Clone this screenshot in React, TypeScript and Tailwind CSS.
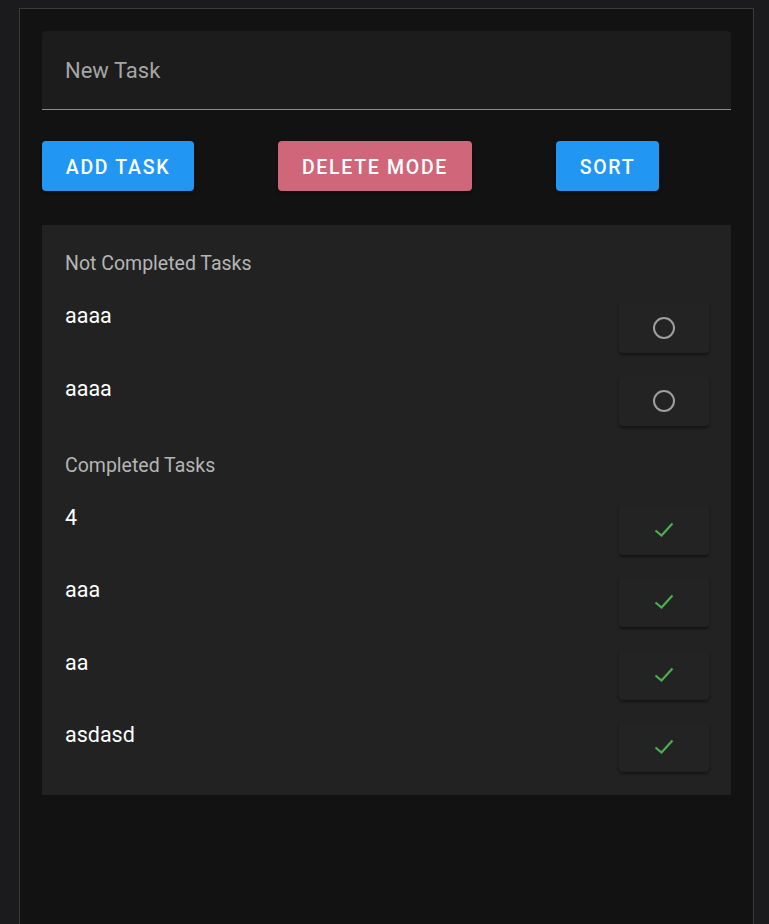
import React from "react";

type Task = { id: number; name: string; done: boolean };

const tasks: Task[] = [
  { id: 1, name: "aaaa", done: false },
  { id: 2, name: "aaaa", done: false },
  { id: 3, name: "4", done: true },
  { id: 4, name: "aaa", done: true },
  { id: 5, name: "aa", done: true },
  { id: 6, name: "asdasd", done: true },
];

const CircleIcon = () => (
  <svg width="24" height="24" viewBox="0 0 24 24" fill="none">
    <circle cx="12" cy="12" r="10" stroke="#9e9e9e" strokeWidth="2" />
  </svg>
);

const CheckIcon = () => (
  <svg width="20" height="16" viewBox="0 0 20 16" fill="none">
    <path d="M1.5 8.5 L7.5 13.5 L18.5 1.5" stroke="#4caf50" strokeWidth="2.2" />
  </svg>
);

const TaskRow = ({ task }: { task: Task }) => (
  <div className="flex items-start justify-between">
    <span className="text-[21.5px] leading-[26px] text-white">{task.name}</span>
    <button className="flex h-[50px] w-[90px] items-center justify-center rounded-[4px] bg-[#232323] shadow-[0_2px_3px_rgba(0,0,0,0.45)]">
      {task.done ? <CheckIcon /> : <CircleIcon />}
    </button>
  </div>
);

const Section = ({ title, items }: { title: string; items: Task[] }) => (
  <div className="flex flex-col gap-[27px]">
    <div className="text-[19.5px] leading-[24px] text-[#b5b5b5]">{title}</div>
    <div className="flex flex-col gap-[22.5px]">
      {items.map((t) => (
        <TaskRow key={t.id} task={t} />
      ))}
    </div>
  </div>
);

export default function App() {
  const open = tasks.filter((t) => !t.done);
  const done = tasks.filter((t) => t.done);

  return (
    <div
      className="min-h-[924px] bg-[#1b1b1d] pl-[19px] pr-[15px] pt-[8px]"
      style={{ fontFamily: "Roboto, 'Liberation Sans', sans-serif" }}
    >
      <div className="min-h-[916px] border border-b-0 border-[#3b3b3b] bg-[#121212] px-[22px] pt-[22px]">
        <div className="flex h-[79px] items-center rounded-t-[4px] border-b border-[#8a8a8a] bg-[#1c1c1c] px-[23px]">
          <input
            placeholder="New Task"
            className="w-full bg-transparent text-[22px] text-white outline-none placeholder:text-[#a5a5a5]"
          />
        </div>

        <div className="mt-[31px] flex gap-[84px]">
          <button className="h-[50px] w-[152px] rounded-[4px] bg-[#2196f3] pt-[3px] text-[19.5px] font-medium tracking-[1.7px] text-white shadow-[0_2px_3px_rgba(0,0,0,0.4)]">
            ADD TASK
          </button>
          <button className="h-[50px] w-[194px] rounded-[4px] bg-[#cf6679] pt-[3px] text-[19.5px] font-medium tracking-[1.7px] text-white shadow-[0_2px_3px_rgba(0,0,0,0.4)]">
            DELETE MODE
          </button>
          <button className="h-[50px] w-[103px] rounded-[4px] bg-[#2196f3] pt-[3px] text-[19.5px] font-medium tracking-[1.7px] text-white shadow-[0_2px_3px_rgba(0,0,0,0.4)]">
            SORT
          </button>
        </div>

        <div className="mt-[34px] flex flex-col gap-[28px] bg-[#222222] pb-[23px] pl-[23px] pr-[22px] pt-[27px]">
          <Section title="Not Completed Tasks" items={open} />
          <Section title="Completed Tasks" items={done} />
        </div>
      </div>
    </div>
  );
}
